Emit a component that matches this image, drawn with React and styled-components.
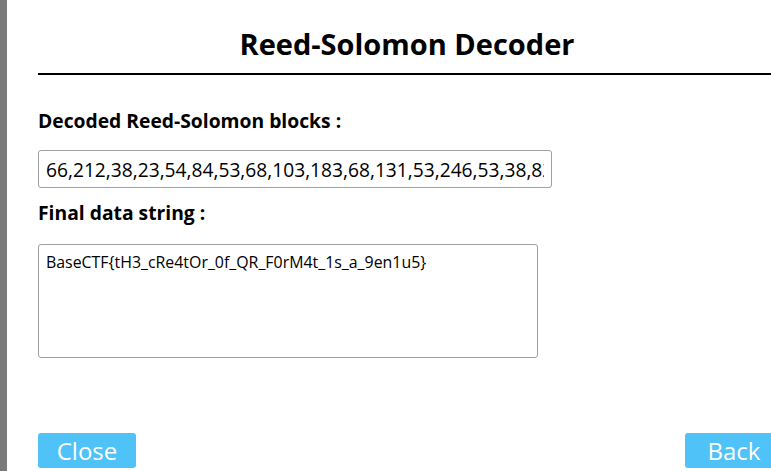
import React, { useState } from 'react';
import styled, { createGlobalStyle } from 'styled-components';

const GlobalStyle = createGlobalStyle`
  html, body {
    margin: 0;
    padding: 0;
    background: #fff;
    overflow: hidden;
  }
  body {
    font-family: "Open Sans", "Liberation Sans", sans-serif;
    color: #000;
  }
`;

const Page = styled.div`
  display: flex;
  height: 471px;
  border-left: 7px solid #7a7a7a;
`;

const Panel = styled.div`
  flex: 0 0 745px;
  margin-left: 31px;
  display: flex;
  flex-direction: column;
`;

const Title = styled.h1`
  margin: 0;
  padding: 25px 7px 10px 0;
  font-size: 29px;
  font-weight: 700;
  line-height: 38px;
  text-align: center;
  border-bottom: 2px solid #000;
`;

const Label = styled.label`
  display: block;
  font-size: 19.3px;
  font-weight: 700;
  line-height: 26px;
  margin-top: ${(p) => p.$top}px;
`;

const Field = styled.input`
  display: block;
  box-sizing: border-box;
  width: 514px;
  height: 38px;
  margin-top: 16px;
  padding: 0 7px;
  border: 1px solid #a0a0a0;
  border-radius: 3px;
  font-family: inherit;
  font-size: 19.2px;
  color: #000;
  outline: none;
`;

const Area = styled.textarea`
  display: block;
  box-sizing: border-box;
  width: 500px;
  height: 114px;
  margin-top: 18px;
  padding: 6px 7px;
  border: 1px solid #a0a0a0;
  border-radius: 3px;
  font-family: inherit;
  font-size: 15.9px;
  line-height: 22px;
  color: #000;
  resize: none;
  outline: none;
`;

const Actions = styled.div`
  margin-top: auto;
  display: flex;
  justify-content: space-between;
  padding-bottom: 3px;
`;

const Button = styled.button`
  width: 98px;
  height: 35px;
  border: none;
  border-radius: 3px;
  background: #4fc3f7;
  color: #fff;
  font-family: inherit;
  font-size: 24px;
  line-height: 35px;
  padding: 0;
  cursor: pointer;
`;

const blocks =
  '66,212,38,23,54,84,53,68,103,183,68,131,53,246,53,38,82,118,39,53,36,17';

const App = () => {
  const [result] = useState('BaseCTF{tH3_cRe4tOr_0f_QR_F0rM4t_1s_a_9en1u5}');

  return (
    <>
      <GlobalStyle />
      <Page>
        <Panel>
          <Title>Reed-Solomon Decoder</Title>
          <Label $top={33}>Decoded Reed-Solomon blocks :</Label>
          <Field readOnly value={blocks} />
          <Label $top={12}>Final data string :</Label>
          <Area readOnly value={result} />
          <Actions>
            <Button>Close</Button>
            <Button>Back</Button>
          </Actions>
        </Panel>
      </Page>
    </>
  );
};

export default App;
